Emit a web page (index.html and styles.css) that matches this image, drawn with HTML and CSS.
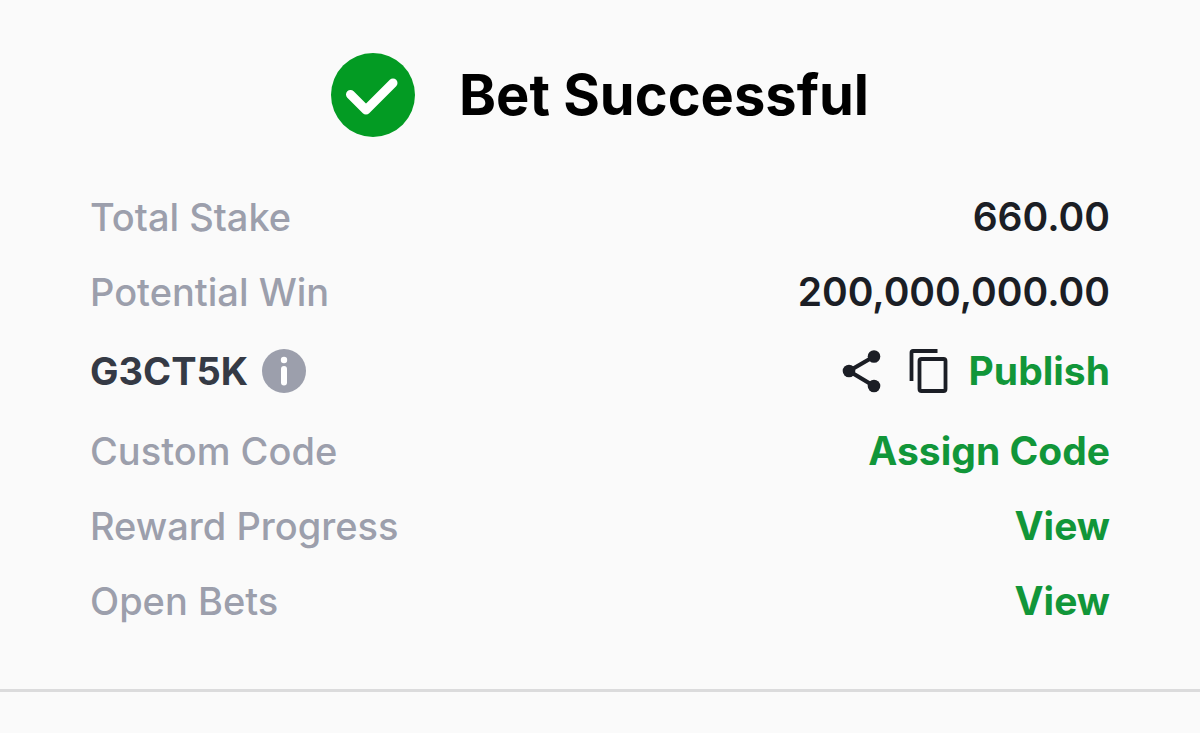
FILE: index.html
```html
<!DOCTYPE html>
<html lang="en">
<head>
  <meta charset="UTF-8">
  <meta name="viewport" content="width=device-width, initial-scale=1.0">
  <title>Bet Successful</title>
  <link rel="stylesheet" href="styles.css">
</head>
<body>
  <main class="receipt">
    <header class="receipt-header">
      <svg class="check-icon" viewBox="0 0 84 84" aria-hidden="true">
        <circle cx="42" cy="42" r="42" fill="#039b23"/>
        <path d="M19.500 41.500L35 57L62 30" fill="none" stroke="#fff" stroke-width="9" stroke-linecap="round" stroke-linejoin="round"/>
      </svg>
      <h1>Bet Successful</h1>
    </header>

    <dl class="details">
      <div class="row">
        <dt>Total Stake</dt>
        <dd>660.00</dd>
      </div>
      <div class="row">
        <dt>Potential Win</dt>
        <dd>200,000,000.00</dd>
      </div>
      <div class="row code-row">
        <dt class="code">
          G3CT5K
          <button type="button" class="icon-button" aria-label="About booking code">
            <svg class="info-icon" viewBox="0 0 44 44" aria-hidden="true">
              <circle cx="22" cy="22" r="22" fill="#9c9fac"/>
              <circle cx="22" cy="11" r="3.200" fill="#fff"/>
              <path d="M22 20V33.500" stroke="#fff" stroke-width="6" stroke-linecap="round"/>
            </svg>
          </button>
        </dt>
        <dd class="actions">
          <div class="icons">
            <button type="button" class="icon-button" aria-label="Share">
              <svg class="share-icon" viewBox="0 0 40 44" aria-hidden="true">
                <path d="M32 7.500L7 22L32 37" fill="none" stroke="#1b1e25" stroke-width="4.200"/>
                <circle cx="7" cy="22" r="6.300" fill="#1b1e25"/>
                <circle cx="32" cy="7.500" r="6.300" fill="#1b1e25"/>
                <circle cx="32" cy="37" r="6.300" fill="#1b1e25"/>
              </svg>
            </button>
            <button type="button" class="icon-button" aria-label="Copy code">
              <svg class="copy-icon" viewBox="0 0 40 44" aria-hidden="true">
                <path d="M28.500 2H4Q2.500 2 2.500 3.500V32" fill="none" stroke="#1b1e25" stroke-width="3.800"/>
                <rect x="10.500" y="10" width="26" height="32" rx="2" fill="none" stroke="#1b1e25" stroke-width="3.800"/>
              </svg>
            </button>
          </div>
          <button type="button" class="link">Publish</button>
        </dd>
      </div>
      <div class="row">
        <dt>Custom Code</dt>
        <dd><button type="button" class="link">Assign Code</button></dd>
      </div>
      <div class="row">
        <dt>Reward Progress</dt>
        <dd><a class="link" href="#rewards">View</a></dd>
      </div>
      <div class="row">
        <dt>Open Bets</dt>
        <dd><a class="link" href="#open-bets">View</a></dd>
      </div>
    </dl>
  </main>
</body>
</html>
```
FILE: styles.css
```css
* {
  box-sizing: border-box;
}
body {
  margin: 0;
  background-color: #fafafa;
  color: #1b1e25;
  font-family: Inter, "Liberation Sans", sans-serif;
  font-size: 39px;
  line-height: 46px;
}
.receipt {
  padding: 53px 90px 51px;
  border-bottom: 3px solid #dbdbdc;
}
.receipt-header {
  display: flex;
  align-items: center;
  justify-content: center;
  gap: 44px;
  margin-bottom: 42px;
}
.check-icon {
  width: 84px;
  height: 84px;
}
h1 {
  margin: 0;
  color: #000;
  font-size: 56px;
  font-weight: 700;
  line-height: 68px;
}
.details {
  margin: 0;
}
.row {
  display: flex;
  align-items: center;
  justify-content: space-between;
  min-height: 75px;
}
.code-row {
  min-height: 84px;
}
dt {
  color: #9c9fac;
  font-size: 38px;
  font-weight: 500;
}
dd {
  margin: 0;
  font-weight: 600;
}
.code {
  display: flex;
  align-items: center;
  gap: 14px;
  color: #353a45;
  font-weight: 700;
}
.actions {
  display: flex;
  align-items: center;
  gap: 20px;
}
.icons {
  display: flex;
  gap: 27px;
}
button {
  padding: 0;
  border: none;
  background: none;
  font: inherit;
  cursor: pointer;
}
.icon-button,
.icon-button svg {
  display: block;
}
.info-icon {
  width: 44px;
  height: 44px;
}
.share-icon,
.copy-icon {
  width: 40px;
  height: 44px;
}
.link {
  color: #119639;
  font-weight: 700;
  text-decoration: none;
}
```
